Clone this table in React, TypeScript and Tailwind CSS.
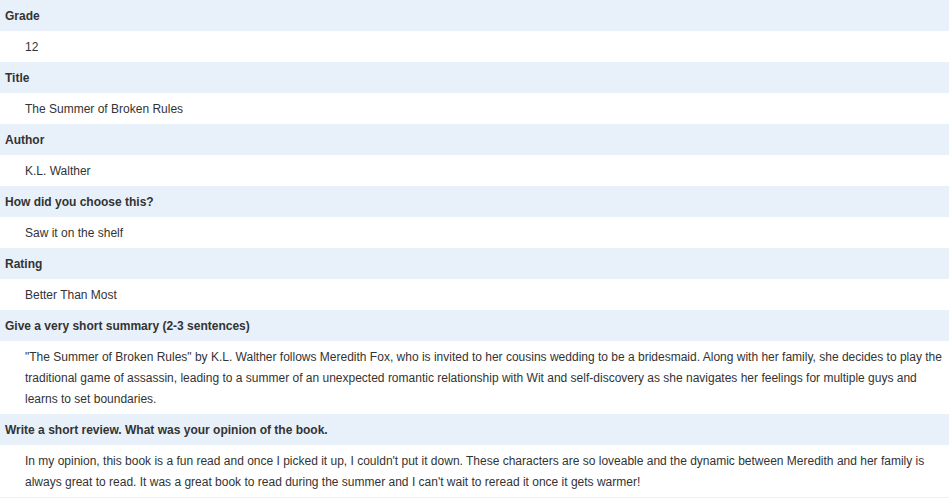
import React from "react";

const rows = [
  { q: "Grade", a: "12" },
  { q: "Title", a: "The Summer of Broken Rules" },
  { q: "Author", a: "K.L. Walther" },
  { q: "How did you choose this?", a: "Saw it on the shelf" },
  { q: "Rating", a: "Better Than Most" },
  {
    q: "Give a very short summary (2-3 sentences)",
    a: "\"The Summer of Broken Rules\" by K.L. Walther follows Meredith Fox, who is invited to her cousins wedding to be a bridesmaid. Along with her family, she decides to play the traditional game of assassin, leading to a summer of an unexpected romantic relationship with Wit and self-discovery as she navigates her feelings for multiple guys and learns to set boundaries.",
  },
  {
    q: "Write a short review. What was your opinion of the book.",
    a: "In my opinion, this book is a fun read and once I picked it up, I couldn't put it down. These characters are so loveable and the dynamic between Meredith and her family is always great to read. It was a great book to read during the summer and I can't wait to reread it once it gets warmer!",
  },
];

export default function App() {
  return (
    <div className="min-h-screen bg-white text-[12px] leading-[21px] text-[#333] font-['Liberation_Sans',Arial,sans-serif]">
      <dl>
        {rows.map((r, i) => (
          <React.Fragment key={i}>
            <dt className="bg-[#e8f1fa] px-[5px] pt-[6px] pb-[4px] font-bold">{r.q}</dt>
            <dd className="pl-[25px] pr-[5px] pt-[6px] pb-[4px]">{r.a}</dd>
          </React.Fragment>
        ))}
        <dt className="bg-[#e8f1fa] px-[5px] pt-[6px] pb-[4px] font-bold">&nbsp;</dt>
      </dl>
    </div>
  );
}
